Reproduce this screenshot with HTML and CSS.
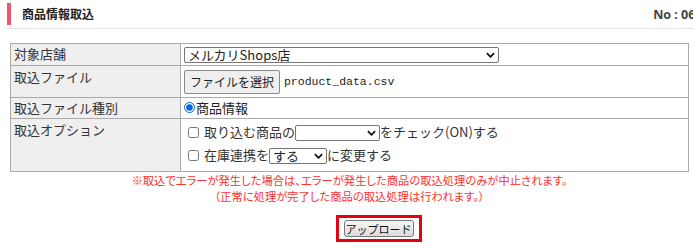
FILE: index.html
```html
<!DOCTYPE html>
<html lang="ja">
<head>
  <meta charset="UTF-8" />
  <meta name="viewport" content="width=device-width, initial-scale=1" />
  <title>商品情報取込</title>
  <link rel="stylesheet" href="styles.css">
</head>
<body>
  <header class="page-head">
    <h1>商品情報取込</h1>
    <div class="page-no">No : 06-0000</div>
  </header>

  <form class="import-form">
    <table class="form-table">
      <tr class="row-shop">
        <th>対象店舗</th>
        <td>
          <span class="sel-wrap shop-select">
            <select><option>メルカリShops店</option></select>
            <svg class="chev" viewBox="0 0 10 6" width="9" height="6"><path d="M1 1 L5 5 L9 1" fill="none" stroke="#111" stroke-width="2"/></svg>
          </span>
        </td>
      </tr>
      <tr class="row-file">
        <th>取込ファイル</th>
        <td>
          <span class="file-btn">ファイルを選択</span>
          <span class="file-name">product_data.csv</span>
        </td>
      </tr>
      <tr class="row-kind">
        <th>取込ファイル種別</th>
        <td>
          <label class="radio"><input type="radio" name="kind" checked>商品情報</label>
        </td>
      </tr>
      <tr class="row-option">
        <th>取込オプション</th>
        <td>
          <div class="opt">
            <input type="checkbox">取り込む商品の<span class="sel-wrap sel-item"><select><option></option></select><svg class="chev" viewBox="0 0 10 6" width="9" height="6"><path d="M1 1 L5 5 L9 1" fill="none" stroke="#111" stroke-width="2"/></svg></span>をチェック(ON)する
          </div>
          <div class="opt">
            <input type="checkbox">在庫連携を<span class="sel-wrap sel-stock"><select><option>する</option></select><svg class="chev" viewBox="0 0 10 6" width="9" height="6"><path d="M1 1 L5 5 L9 1" fill="none" stroke="#111" stroke-width="2"/></svg></span>に変更する
          </div>
        </td>
      </tr>
    </table>

    <p class="notice">※取込でエラーが発生した場合は、エラーが発生した商品の取込処理のみが中止されます。<br>（正常に処理が完了した商品の取込処理は行われます。）</p>

    <div class="actions">
      <span class="upload-wrap"><button type="button" class="upload">アップロード</button></span>
    </div>
  </form>
</body>
</html>
```

FILE: styles.css
```css
html, body {
  overflow: hidden;
}

body {
  margin: 0;
  font-family: "Noto Sans CJK JP", sans-serif;
  font-size: 13px;
  color: #333;
  background: #fff;
}

.page-head {
  display: flex;
  justify-content: space-between;
  align-items: center;
  margin: 3px -35px 0 7px;
  padding-bottom: 3px;
  border-bottom: 1px solid #e2e2e2;
}

.page-head h1 {
  margin: 0;
  padding-left: 11px;
  border-left: 4px solid #f2546a;
  height: 22px;
  line-height: 21px;
  font-size: 12px;
  font-weight: bold;
  color: #222;
}

.page-no {
  font-family: "Open Sans", sans-serif;
  font-weight: bold;
  font-size: 12.5px;
  color: #444;
}

.import-form {
  padding: 14px 4px 0 10px;
}

.form-table {
  width: 679px;
  border-collapse: collapse;
  border: 1px solid #aaa;
}

.form-table th,
.form-table td {
  border: 1px solid #aaa;
  text-align: left;
  vertical-align: top;
  padding: 0 3px;
  font-weight: normal;
  color: #333;
}

.form-table th {
  width: 163px;
  background: #efefef;
}

.row-shop th, .row-shop td { height: 21px; line-height: 20px; }
.row-file th, .row-file td { height: 31px; line-height: 21px; }
.row-kind th, .row-kind td { height: 20px; line-height: 19px; }
.row-option th, .row-option td { height: 52px; line-height: 21px; }

/* select boxes */
.sel-wrap {
  position: relative;
  display: inline-block;
  height: 16px;
  vertical-align: middle;
}

.sel-wrap select {
  appearance: none;
  width: 100%;
  height: 16px;
  margin: 0;
  padding: 0 16px 0 3px;
  font-family: inherit;
  font-size: 13px;
  line-height: 14px;
  color: #222;
  border: 1px solid #767676;
  border-radius: 2px;
  background: #fff;
  display: block;
}

.sel-wrap .chev {
  position: absolute;
  right: 4px;
  top: 5px;
  pointer-events: none;
}

.shop-select {
  width: 315px;
  margin-top: 3px;
  vertical-align: top;
}

.file-btn {
  display: inline-block;
  margin-top: 4px;
  padding: 0 5px;
  height: 22px;
  line-height: 21px;
  font-size: 12px;
  color: #222;
  border: 1px solid #8a8a8a;
  border-radius: 2px;
  background: #efefef;
  vertical-align: top;
}

.file-name {
  display: inline-block;
  margin-top: 4px;
  margin-left: 1px;
  line-height: 23px;
  font-family: "Liberation Mono", monospace;
  font-size: 11.5px;
  color: #222;
  vertical-align: top;
}

.radio {
  display: inline-flex;
  align-items: center;
  color: #222;
}

.radio input {
  width: 11px;
  height: 11px;
  margin: 0 1px 0 0;
  accent-color: #0a63d8;
}

.opt {
  height: 23px;
  line-height: 23px;
  color: #333;
  white-space: nowrap;
}

.opt:first-child {
  margin-top: 1px;
}

.opt input {
  width: 11px;
  height: 11px;
  margin: 0 5px 0 4px;
  vertical-align: -1px;
}

.sel-item {
  width: 85px;
}

.sel-stock {
  width: 58px;
}

.notice {
  margin: 0;
  text-align: center;
  font-size: 11.3px;
  line-height: 16px;
  color: #ff3030;
  font-feature-settings: "palt";
}

.actions {
  text-align: center;
  margin-top: 11px;
  padding-left: 58px;
}

.upload-wrap {
  display: inline-block;
  border: 3px solid #e60012;
  padding: 2px 5px;
}

.upload {
  display: block;
  height: 17px;
  padding: 0 1px;
  font-family: inherit;
  font-size: 11px;
  line-height: 14px;
  color: #111;
  border: 1px solid #777;
  border-radius: 3px;
  background: linear-gradient(#f6f6f6, #dcdcdc);
}
```
